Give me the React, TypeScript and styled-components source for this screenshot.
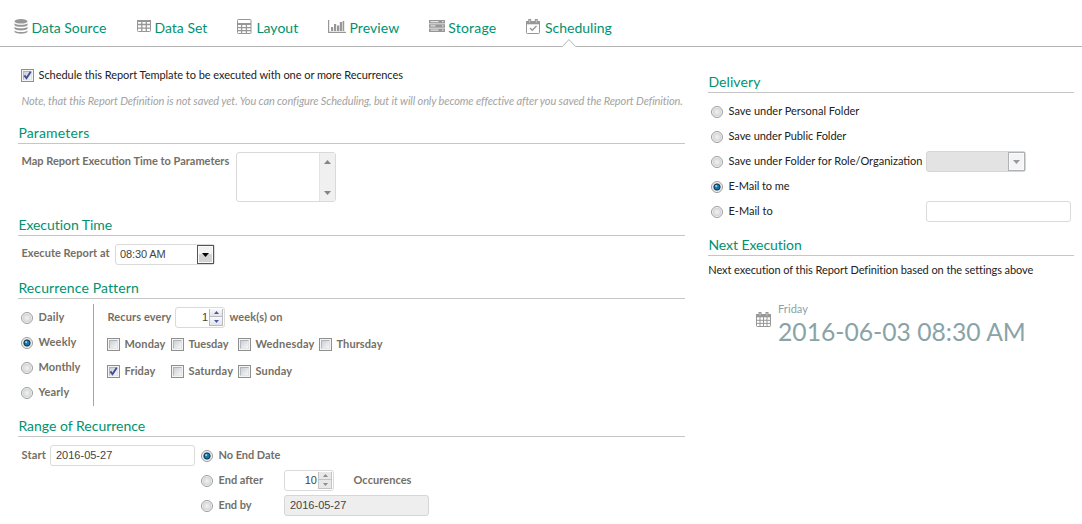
import React from "react";
import styled, { createGlobalStyle, css } from "styled-components";

const GlobalStyle = createGlobalStyle`
  body { margin: 0; background: #fff; overflow: hidden; }
  *, *::before, *::after { box-sizing: border-box; }
`;

const Page = styled.div`
  width: 1082px;
  height: 524px;
  font: 11px/20px Lato, sans-serif;
  color: #222;
  white-space: nowrap;
`;

const TabBar = styled.nav`
  display: grid;
  grid-template-columns: 123px 100px 91px 101px 97px 100px;
  height: 47px;
  padding: 18px 0 0 14px;
  border-bottom: 1px solid #b4b4b4;
`;

const Tab = styled.a<{ $slot: number; $track?: number }>`
  position: relative;
  display: grid;
  grid-template-columns: ${(p) => p.$slot}px auto;
  align-items: start;
  height: 28px;
  color: #009270;
  font-size: 14px;
  letter-spacing: ${(p) => p.$track ?? 0}px;
`;

const TabIcon = styled.svg`
  display: block;
  width: 18px;
  height: 17px;
  color: #979797;
`;

const Notch = styled.svg`
  position: absolute;
  left: 35px;
  top: 20px;
  width: 16px;
  height: 9px;
`;

const Columns = styled.main`
  display: grid;
  grid-template-columns: 667px 366px;
  column-gap: 23px;
  padding-left: 18px;
`;

const Settings = styled.div`
  padding-top: 18px;
`;

const Sidebar = styled.div`
  padding-top: 26px;
`;

const Heading = styled.h2<{ $gap?: number; $track?: number }>`
  height: 20px;
  margin: ${(p) => p.$gap ?? 0}px 0 0;
  padding-left: 0.4px;
  border-bottom: 1px solid #c6c6c6;
  color: #009270;
  font-size: 14px;
  font-weight: 400;
  line-height: 18px;
  letter-spacing: ${(p) => p.$track ?? 0}px;
`;

const Note = styled.p`
  margin: 6px 0 0 3.5px;
  height: 20px;
  color: #a3a3a3;
  font-style: italic;
  letter-spacing: -0.117px;
`;

const Caption = styled.span<{ $bold?: boolean; $track?: number }>`
  padding-left: 0.5px;
  letter-spacing: ${(p) => p.$track ?? 0}px;
  ${(p) =>
    p.$bold &&
    css`
      color: #746f66;
      font-weight: 700;
    `}
`;

const RowCaption = styled(Caption)`
  line-height: 18px;
`;

const ScheduleRow = styled.label`
  display: grid;
  grid-template-columns: 17px auto;
  height: 20px;
  padding-left: 3px;
`;

const CheckBoxFrame = styled.span`
  width: 13px;
  height: 13px;
  margin-top: 4px;
  border: 1px solid #8e8f8f;
  padding: 1px;
  background: #f4f4f4;
`;

const CheckBoxFace = styled.span`
  display: block;
  height: 9px;
  border: 1px solid;
  border-color: #aeb3b9 #e0e2e4 #e4e5e6 #b3b8bd;
  background: linear-gradient(135deg, #cbcfd5, #f6f6f6);
`;

const CheckMark = styled.svg`
  display: block;
  width: 9px;
  height: 9px;
  margin: -1px;
`;

const ParameterRow = styled.div`
  display: grid;
  grid-template-columns: 215px 100px;
  padding: 8px 0 0 3px;
`;

const ListBox = styled.div`
  display: flex;
  justify-content: flex-end;
  height: 50px;
  border: 1px solid #d9d9d9;
  border-radius: 3px;
`;

const ScrollTrack = styled.div`
  display: flex;
  flex-direction: column;
  justify-content: space-between;
  align-items: center;
  width: 16px;
  padding: 7px 0 6px;
  border-left: 1px solid #e3e3e3;
  background: #f0f0f0;
`;

const Arrow = styled.svg`
  display: block;
`;

const TimeRow = styled.div`
  display: grid;
  grid-template-columns: 94px 100px;
  padding: 8px 0 0 3px;
`;

const Field = styled.div<{ $width: number; $fill?: string; $align?: string; $inset?: number; $track?: number }>`
  display: flex;
  justify-content: ${(p) => p.$align ?? "space-between"};
  width: ${(p) => p.$width}px;
  height: 21px;
  padding-left: ${(p) => p.$inset ?? 4}px;
  border: 1px solid ${(p) => (p.$fill ? "#d6d6d6" : "#dadada")};
  border-radius: 3px;
  background: ${(p) => p.$fill ?? "#fff"};
  color: #444;
  font: 11px/19px "Liberation Sans", Arial, sans-serif;
  letter-spacing: ${(p) => p.$track ?? 0}px;
`;

const DropButton = styled.span<{ $muted?: boolean }>`
  display: flex;
  align-items: center;
  justify-content: center;
  width: 17px;
  height: 19px;
  border: 1px solid ${(p) => (p.$muted ? "#adb2b5" : "#555")};
  box-shadow: inset 0 0 0 1px #fafafa;
  background: ${(p) => (p.$muted ? "#f4f4f4" : "linear-gradient(#f2f2f2 45%, #d2d2d2 50%)")};
`;

const SpinButtons = styled.span`
  display: grid;
  grid-template-rows: 8px 9px;
  width: 14px;
  height: 17px;
  margin: 1px 1px 0 1px;
`;

const SpinButton = styled.span<{ $muted?: boolean }>`
  display: flex;
  align-items: center;
  justify-content: center;
  border: 1px solid ${(p) => (p.$muted ? "#c3c3c3" : "#b9b9c0")};
  border-top-width: 0;
  background: ${(p) => (p.$muted ? "#e8e8e8" : "linear-gradient(#fafafb, #e3e3e9)")};
`;

const Recurrence = styled.div`
  display: grid;
  grid-template-columns: 75px auto;
  margin-top: 5px;
  height: 102px;
`;

const Frequencies = styled.div`
  padding: 1px 0 0 3px;
`;

const Option = styled.label`
  display: grid;
  grid-template-columns: 17px auto;
  height: 25px;
`;

const RadioIcon = styled.svg`
  display: block;
  width: 12px;
  height: 12px;
  margin-top: 7px;
`;

const Weekly = styled.div`
  border-left: 1px solid #a6a6a6;
  padding: 3px 0 0 13px;
`;

const EveryRow = styled.div`
  display: grid;
  grid-template-columns: 68px 54px auto;
  height: 27px;
`;

const Days = styled.div`
  display: grid;
  grid-template-columns: 64px 67px 81px 70px;
  grid-auto-rows: 27px;
`;

const Day = styled.label`
  display: grid;
  grid-template-columns: 17px auto;
`;

const Range = styled.div`
  display: grid;
  grid-template-columns: 29px 151px auto;
  padding: 8px 0 0 3px;
`;

const Endings = styled.div`
  margin-top: -2px;
`;

const Ending = styled.div`
  display: grid;
  grid-template-columns: 83px 69px auto;
  height: 25px;
  & > ${Field} { margin-top: 2px; }
`;

const EndingCaption = styled(Caption)`
  line-height: 23px;
`;

const OptionCaption = styled(Caption)`
  line-height: 24px;
`;

const Deliveries = styled.div`
  padding: 6px 0 0 3px;
`;

const Delivery = styled.div`
  display: grid;
  grid-template-columns: 215px auto;
  height: 25px;
  & > ${Field} { margin-top: 2px; }
`;

const NextText = styled.p`
  margin: 4px 0 0 0.3px;
  height: 20px;
  letter-spacing: -0.078px;
`;

const NextRun = styled.div`
  display: grid;
  grid-template-columns: 22px auto;
  padding: 19px 0 0 48px;
  color: #88a4a8;
`;

const NextIcon = styled(TabIcon)`
  margin-top: 12px;
`;

const NextDay = styled.div`
  letter-spacing: 0.08px;
`;

const NextDate = styled.div`
  font-size: 24.7px;
  line-height: 25px;
`;

function Radio({ on }: { on?: boolean }) {
  return (
    <RadioIcon viewBox="0 0 12 12">
      <defs>
        <radialGradient id="radioFace">
          <stop offset="0" stopColor="#f2f2f2" />
          <stop offset="1" stopColor="#d6d9db" />
        </radialGradient>
      </defs>
      <circle cx="6" cy="6" r="5.5" fill="#f8f8f8" stroke="#8f9090" strokeWidth=".9" />
      <circle cx="6" cy="6" r="4" fill="url(#radioFace)" stroke="#c9ccce" strokeWidth=".5" />
      {on && <circle cx="6" cy="6" r="3.1" fill="#1579ad" stroke="#12304b" />}
      {on && <circle cx="5.2" cy="5.1" r="1.1" fill="#8fd6f4" />}
    </RadioIcon>
  );
}

function CheckBox({ on }: { on?: boolean }) {
  return (
    <CheckBoxFrame>
      <CheckBoxFace>
        {on && (
          <CheckMark viewBox="0 0 9 9">
            <path d="M1.4 4.4 3.5 7.2 7.7.8" fill="none" stroke="#3c4f92" strokeWidth="1.9" />
          </CheckMark>
        )}
      </CheckBoxFace>
    </CheckBoxFrame>
  );
}

function Triangle({ up, size = 7, color = "#858585" }: { up?: boolean; size?: number; color?: string }) {
  return (
    <Arrow width={size} height={size > 5 ? 4 : 3} viewBox="0 0 7 4" preserveAspectRatio="none">
      <path d={up ? "M0 4 3.5 0 7 4Z" : "M0 0H7L3.5 4Z"} fill={color} />
    </Arrow>
  );
}

function Spinner({ value, muted }: { value: string; muted?: boolean }) {
  const color = muted ? "#8d8d8d" : "#4a58a5";
  return (
    <Field $width={50} $align="flex-end">
      {value}
      <SpinButtons>
        <SpinButton $muted={muted}><Triangle up size={5} color={color} /></SpinButton>
        <SpinButton $muted={muted}><Triangle size={5} color={color} /></SpinButton>
      </SpinButtons>
    </Field>
  );
}

const DatabaseIcon = () => (
  <TabIcon viewBox="0 0 18 17" fill="currentColor">
    <ellipse cx="7" cy="3.3" rx="6.5" ry="2.3" />
    <path d="M.5 5.2c2.2 2 10.8 2 13 0v2c-2 2.2-11 2.2-13 0zM.5 8.8c2.2 2 10.8 2 13 0v2c-2 2.2-11 2.2-13 0zM.5 12.4c2.2 2 10.8 2 13 0v1.7c-2 2.3-11 2.3-13 0z" />
  </TabIcon>
);

const TableIcon = () => (
  <TabIcon viewBox="0 0 18 17" fill="none" stroke="currentColor">
    <rect x=".5" y="2.5" width="13" height="11" rx=".8" />
    <path d="M0 3h14" strokeWidth="2" />
    <path d="M0 6.5h14M0 10.2h14M4.8 2v12M9.3 2v12" strokeWidth="1.3" />
  </TabIcon>
);

const LayoutIcon = () => (
  <TabIcon viewBox="0 0 18 17" fill="none" stroke="currentColor">
    <rect x=".5" y="1.5" width="13.5" height="14" rx=".8" />
    <path d="M0 9.7h14M0 12.6h14M4.6 7v9M9.4 7v9" strokeWidth="1.3" />
    <path d="M0 6h14" strokeWidth="2" />
  </TabIcon>
);

const ChartIcon = () => (
  <TabIcon viewBox="0 0 18 17" fill="currentColor">
    <path d="M0 2h1.2v11.8H18V15H0zM3 9h2.2v4H3zM6 6h2.2v7H6zM9 7.5h2.2V13H9zM11.8 4H14v9h-2.2zM14.6 3h1.6v10h-1.6z" />
  </TabIcon>
);

const ServerIcon = () => (
  <TabIcon viewBox="0 0 18 17">
    <path d="M0 2h16v3.5H0zM0 6.2h16v3.5H0zM0 10.4h16v3.5H0z" fill="currentColor" />
    <path d="M1.5 3.7h8M1.5 7.9h5M1.5 12.1h8M13 3.7h1.5M13 7.9h1.5M13 12.1h1.5" stroke="#fff" strokeWidth=".9" />
  </TabIcon>
);

const CheckCalendarIcon = () => (
  <TabIcon viewBox="0 0 18 17" fill="none" stroke="currentColor">
    <rect x=".5" y="3.5" width="13" height="12" rx=".8" />
    <path d="M0 4.7h14" strokeWidth="3.2" />
    <path d="M3.7 1v4M10.3 1v4" strokeWidth="3" />
    <path d="M3.7 2v2.5M10.3 2v2.5" stroke="#fff" strokeOpacity=".55" />
    <path d="m4 10 2.2 2.3L10.5 8" strokeWidth="1.4" />
  </TabIcon>
);

const CalendarIcon = () => (
  <NextIcon viewBox="0 0 18 17" fill="none" stroke="currentColor">
    <rect x=".5" y="3.5" width="14" height="12" rx=".8" />
    <path d="M0 4.7h15" strokeWidth="3.2" />
    <path d="M4 1v4M11 1v4" strokeWidth="3" />
    <path d="M4 2v2.5M11 2v2.5" stroke="#fff" strokeOpacity=".55" />
    <path d="M0 9.3h15M0 12.4h15M4 6v10M7.5 6v10M11 6v10" />
  </NextIcon>
);

const frequencies = [
  { name: "Daily", track: 0.18 },
  { name: "Weekly", track: 0.17, on: true },
  { name: "Monthly", track: 0.07 },
  { name: "Yearly", track: 0.17 },
];

const days = [
  { name: "Monday", track: 0.13 },
  { name: "Tuesday", track: 0 },
  { name: "Wednesday", track: 0.18 },
  { name: "Thursday", track: 0.09 },
  { name: "Friday", track: 0.14, on: true },
  { name: "Saturday", track: 0.18 },
  { name: "Sunday", track: 0.15 },
];

export default function App() {
  return (
    <Page>
      <GlobalStyle />
      <TabBar>
        <Tab $slot={17.4}><DatabaseIcon />Data Source</Tab>
        <Tab $slot={17.5}><TableIcon />Data Set</Tab>
        <Tab $slot={19.4}><LayoutIcon />Layout</Tab>
        <Tab $slot={21.4} $track={0.1}><ChartIcon />Preview</Tab>
        <Tab $slot={19.3} $track={0.19}><ServerIcon />Storage</Tab>
        <Tab $slot={19}>
          <CheckCalendarIcon />Scheduling
          <Notch viewBox="0 0 16 9">
            <path d="M1 8.5 8 1.5 15 8.5V9H1Z" fill="#fff" />
            <path d="M.5 8.5h1L8 1.5l6.5 7h1" fill="none" stroke="#b4b4b4" />
          </Notch>
        </Tab>
      </TabBar>
      <Columns>
        <Settings>
          <ScheduleRow>
            <CheckBox on />
            <Caption $track={-0.05}>Schedule this Report Template to be executed with one or more Recurrences</Caption>
          </ScheduleRow>
          <Note>
            Note, that this Report Definition is not saved yet. You can configure Scheduling, but it will only become
            effective after you saved the Report Definition.
          </Note>

          <Heading $gap={13} $track={0.16}>Parameters</Heading>
          <ParameterRow>
            <RowCaption $bold>Map Report Execution Time to Parameters</RowCaption>
            <ListBox>
              <ScrollTrack>
                <Triangle up />
                <Triangle />
              </ScrollTrack>
            </ListBox>
          </ParameterRow>

          <Heading $gap={14} $track={-0.05}>Execution Time</Heading>
          <TimeRow>
            <RowCaption $bold $track={0.04}>Execute Report at</RowCaption>
            <Field $width={100} $track={-0.12}>
              08:30 AM
              <DropButton><Triangle color="#000" /></DropButton>
            </Field>
          </TimeRow>

          <Heading $gap={14} $track={0.13}>Recurrence Pattern</Heading>
          <Recurrence>
            <Frequencies>
              {frequencies.map((f) => (
                <Option key={f.name}>
                  <Radio on={f.on} />
                  <OptionCaption $bold $track={f.track}>{f.name}</OptionCaption>
                </Option>
              ))}
            </Frequencies>
            <Weekly>
              <EveryRow>
                <Caption $bold $track={0.1}>Recurs every</Caption>
                <Spinner value="1" />
                <Caption $bold $track={0.1}>week(s) on</Caption>
              </EveryRow>
              <Days>
                {days.map((d) => (
                  <Day key={d.name}>
                    <CheckBox on={d.on} />
                    <Caption $bold $track={d.track}>{d.name}</Caption>
                  </Day>
                ))}
              </Days>
            </Weekly>
          </Recurrence>

          <Heading $gap={11}>Range of Recurrence</Heading>
          <Range>
            <Caption $bold $track={0.2}>Start</Caption>
            <Field $width={145} $inset={5}>2016-05-27</Field>
            <Endings>
              <Ending>
                <Option><Radio on /><EndingCaption $bold $track={-0.04}>No End Date</EndingCaption></Option>
              </Ending>
              <Ending>
                <Option><Radio /><EndingCaption $bold>End after</EndingCaption></Option>
                <Spinner value="10" muted />
                <EndingCaption $bold $track={0.05}>Occurences</EndingCaption>
              </Ending>
              <Ending>
                <Option><Radio /><EndingCaption $bold $track={-0.04}>End by</EndingCaption></Option>
                <Field $width={145} $inset={5} $fill="#eee">2016-05-27</Field>
              </Ending>
            </Endings>
          </Range>
        </Settings>

        <Sidebar>
          <Heading $track={0.09}>Delivery</Heading>
          <Deliveries>
            <Delivery>
              <Option><Radio /><OptionCaption>Save under Personal Folder</OptionCaption></Option>
            </Delivery>
            <Delivery>
              <Option><Radio /><OptionCaption $track={-0.05}>Save under Public Folder</OptionCaption></Option>
            </Delivery>
            <Delivery>
              <Option><Radio /><OptionCaption>Save under Folder for Role/Organization</OptionCaption></Option>
              <Field $width={100} $fill="#e3e3e3" $align="flex-end">
                <DropButton $muted><Triangle color="#999" /></DropButton>
              </Field>
            </Delivery>
            <Delivery>
              <Option><Radio on /><OptionCaption $track={-0.07}>E-Mail to me</OptionCaption></Option>
            </Delivery>
            <Delivery>
              <Option><Radio /><OptionCaption>E-Mail to</OptionCaption></Option>
              <Field $width={145} />
            </Delivery>
          </Deliveries>

          <Heading $gap={12} $track={-0.06}>Next Execution</Heading>
          <NextText>Next execution of this Report Definition based on the settings above</NextText>
          <NextRun>
            <CalendarIcon />
            <div>
              <NextDay>Friday</NextDay>
              <NextDate>2016-06-03 08:30 AM</NextDate>
            </div>
          </NextRun>
        </Sidebar>
      </Columns>
    </Page>
  );
}
